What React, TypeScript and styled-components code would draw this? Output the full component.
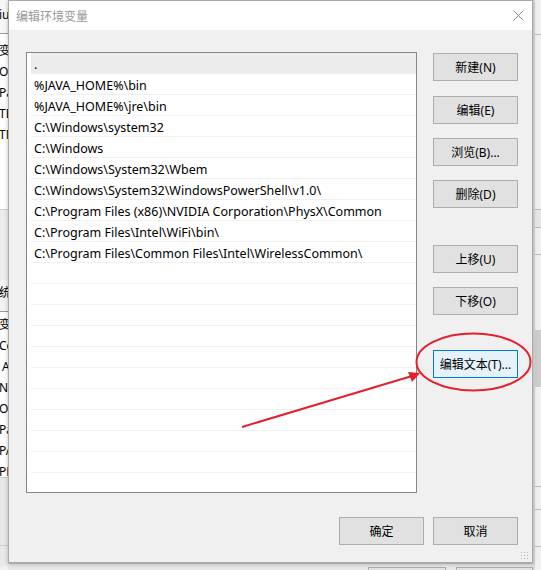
import React from "react";
import styled, { createGlobalStyle } from "styled-components";

const Global = createGlobalStyle`
  html, body { margin: 0; padding: 0; background: #f0f0f0; overflow: hidden; }
  body { font-family: "Noto Sans", "Noto Sans CJK SC", sans-serif; }
`;

const Desktop = styled.div`
  position: relative;
  width: 541px;
  height: 570px;
  display: grid;
  grid-template-columns: 8px 525px 8px;
  grid-template-rows: 563px 7px;
  background: #f0f0f0;
  overflow: hidden;
`;

/* ---------- background window strips ---------- */
const LeftStrip = styled.div`
  grid-column: 1;
  grid-row: 1 / span 2;
  display: flex;
  flex-direction: column;
  overflow: hidden;
  background: #f0f0f0;
`;

const StripBlock = styled.div<{ $h: number; $bg: string; $line?: string; $pad?: number }>`
  height: ${(p) => p.$h}px;
  flex: none;
  box-sizing: border-box;
  background: ${(p) => p.$bg};
  border-bottom: ${(p) => (p.$line ? `1px solid ${p.$line}` : "none")};
  padding-top: ${(p) => p.$pad ?? 0}px;
  overflow: hidden;
`;

const StripText = styled.div`
  height: 21px;
  line-height: 21px;
  font-size: 12px;
  color: #000;
  white-space: nowrap;
  margin-left: -1px;
`;

const RightStrip = styled.div`
  grid-column: 3;
  grid-row: 1 / span 2;
  display: flex;
  flex-direction: column;
  background: #f0f0f0;
  border-left: 2px solid #d9d9d9;
  box-sizing: border-box;
`;

const RightBlock = styled.div<{ $h: number; $bg?: string; $line?: boolean }>`
  height: ${(p) => p.$h}px;
  flex: none;
  box-sizing: border-box;
  background: ${(p) => p.$bg ?? "transparent"};
  border-bottom: ${(p) => (p.$line ? "1px solid #bcbcbc" : "none")};
`;

const BottomStrip = styled.div`
  grid-column: 2;
  grid-row: 2;
  background: #e6e6e6;
  border-top: 1px solid #c9c9c9;
  display: flex;
  padding-left: 360px;
  gap: 10px;
`;

const GhostButton = styled.div`
  width: 85px;
  height: 10px;
  margin-top: 3px;
  border: 1px solid #adadad;
  background: #e1e1e1;
`;

/* ---------- dialog ---------- */
const Dialog = styled.div`
  grid-column: 2;
  grid-row: 1;
  position: relative;
  display: flex;
  flex-direction: column;
  background: #f0f0f0;
  border: 1px solid #a9a9a9;
  box-sizing: border-box;
  box-shadow: 0 1px 4px rgba(0, 0, 0, 0.25);
`;

const TitleBar = styled.div`
  height: 29px;
  flex: none;
  display: flex;
  align-items: center;
  background: #ffffff;
  padding-left: 7px;
`;

const Title = styled.div`
  flex: 1;
  font-size: 12px;
  color: #999999;
  font-family: "Noto Sans CJK SC", sans-serif;
`;

const CloseBox = styled.div`
  width: 28px;
  height: 29px;
  display: flex;
  align-items: center;
  justify-content: center;
`;

const Body = styled.div`
  display: grid;
  grid-template-columns: 391px 85px;
  column-gap: 16px;
  padding: 22px 0 0 17px;
`;

const ListBox = styled.div`
  height: 441px;
  box-sizing: border-box;
  border: 1px solid #828790;
  background: #ffffff;
  padding-left: 4px;
  overflow: hidden;
`;

const Row = styled.div<{ $selected?: boolean }>`
  height: 21px;
  box-sizing: border-box;
  border-bottom: 1px solid #f0f0f0;
  padding: 3px 0 0 3px;
  line-height: 17px;
  font-size: 12.5px;
  color: #000;
  white-space: nowrap;
  background: ${(p) => (p.$selected ? "#ececec" : "#ffffff")};
`;

const ButtonColumn = styled.div`
  display: flex;
  flex-direction: column;
`;

const Button = styled.div<{ $gap?: number; $focused?: boolean }>`
  width: 85px;
  height: 28px;
  flex: none;
  box-sizing: border-box;
  margin-top: ${(p) => p.$gap ?? 0}px;
  display: flex;
  align-items: center;
  justify-content: center;
  font-size: 12px;
  color: #000;
  background: ${(p) => (p.$focused ? "#e5f1fb" : "#e1e1e1")};
  border: 1px solid ${(p) => (p.$focused ? "#0078d7" : "#adadad")};
`;

const Footer = styled.div`
  display: flex;
  justify-content: flex-end;
  gap: 9px;
  padding-right: 14px;
  margin-top: 24px;
`;

const SizeGrip = styled.div`
  position: absolute;
  right: 4px;
  bottom: 3px;
  width: 8px;
  height: 8px;
  background-image: radial-gradient(#b5b5b5 0.9px, transparent 1px);
  background-size: 3px 3px;
`;

const Annotation = styled.svg`
  position: absolute;
  left: 0;
  top: 0;
  pointer-events: none;
`;

const paths = [
  ".",
  "%JAVA_HOME%\\bin",
  "%JAVA_HOME%\\jre\\bin",
  "C:\\Windows\\system32",
  "C:\\Windows",
  "C:\\Windows\\System32\\Wbem",
  "C:\\Windows\\System32\\WindowsPowerShell\\v1.0\\",
  "C:\\Program Files (x86)\\NVIDIA Corporation\\PhysX\\Common",
  "C:\\Program Files\\Intel\\WiFi\\bin\\",
  "C:\\Program Files\\Common Files\\Intel\\WirelessCommon\\",
];

const rows = [...paths, ...Array(12).fill("")];

const sideButtons: { label: string; gap: number; focused?: boolean }[] = [
  { label: "新建(N)", gap: 1 },
  { label: "编辑(E)", gap: 15 },
  { label: "浏览(B)...", gap: 14 },
  { label: "删除(D)", gap: 14 },
  { label: "上移(U)", gap: 37 },
  { label: "下移(O)", gap: 14 },
  { label: "编辑文本(T)...", gap: 35, focused: true },
];

export default function App() {
  return (
    <>
      <Global />
      <Desktop>
        <LeftStrip>
          <StripBlock $h={34} $bg="#f7f7f7" $line="#9a9a9a" $pad={4}>
            <StripText>iu</StripText>
          </StripBlock>
          <StripBlock $h={176} $bg="#ffffff" $line="#d0d0d0" $pad={6}>
            <StripText>变</StripText>
            <StripText>Os</StripText>
            <StripText>Pa</StripText>
            <StripText>TE</StripText>
            <StripText>TM</StripText>
          </StripBlock>
          <StripBlock $h={70} $bg="#ececec" />
          <StripBlock $h={32} $bg="#f3f3f3" $line="#9a9a9a" $pad={2}>
            <StripText>统</StripText>
          </StripBlock>
          <StripBlock $h={166} $bg="#ffffff" $line="#cfcfcf" $pad={2}>
            <StripText>变</StripText>
            <StripText>Co</StripText>
            <StripText>&nbsp;A</StripText>
            <StripText>NU</StripText>
            <StripText>OS</StripText>
            <StripText>Pa</StripText>
            <StripText>PA</StripText>
            <StripText>PR</StripText>
          </StripBlock>
          <StripBlock $h={68} $bg="#e8e8e8" $line="#cccccc" />
          <StripBlock $h={20} $bg="#e8e8e8" />
        </LeftStrip>

        <Dialog>
          <TitleBar>
            <Title>编辑环境变量</Title>
            <CloseBox>
              <svg width="11" height="11" viewBox="0 0 11 11">
                <path d="M0.5 0.5 L10.5 10.5 M10.5 0.5 L0.5 10.5" stroke="#8c8c8c" strokeWidth="1" fill="none" />
              </svg>
            </CloseBox>
          </TitleBar>
          <Body>
            <ListBox>
              {rows.map((r, i) => (
                <Row key={i} $selected={i === 0}>
                  {r}
                </Row>
              ))}
            </ListBox>
            <ButtonColumn>
              {sideButtons.map((b) => (
                <Button key={b.label} $gap={b.gap} $focused={b.focused}>
                  {b.label}
                </Button>
              ))}
            </ButtonColumn>
          </Body>
          <Footer>
            <Button>确定</Button>
            <Button>取消</Button>
          </Footer>
          <SizeGrip />
        </Dialog>

        <RightStrip>
          <RightBlock $h={35} $line />
          <RightBlock $h={175} $line />
          <RightBlock $h={18} $bg="#e6e6e6" $line />
          <RightBlock $h={27} $line />
          <RightBlock $h={75} />
          <RightBlock $h={57} $bg="#cdcdcd" />
          <RightBlock $h={100} $line />
          <RightBlock $h={23} $line />
          <RightBlock $h={37} $line />
        </RightStrip>

        <BottomStrip>
          <GhostButton />
          <GhostButton />
        </BottomStrip>

        <Annotation width="541" height="570" viewBox="0 0 541 570">
          <ellipse cx="473.5" cy="362" rx="57" ry="28.5" fill="none" stroke="#e3202c" strokeWidth="2" />
          <line x1="242" y1="427" x2="412" y2="376" stroke="#e3202c" strokeWidth="2" />
          <polygon points="420,373 408,372 412,382" fill="#e3202c" />
        </Annotation>
      </Desktop>
    </>
  );
}
